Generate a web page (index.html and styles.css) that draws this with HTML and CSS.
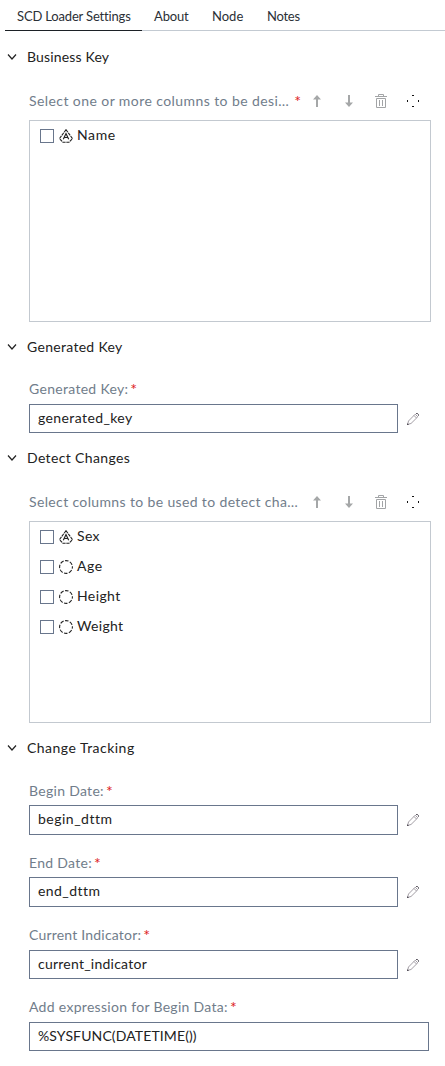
FILE: index.html
```html
<!DOCTYPE html>
<html lang="en">
<head>
<meta charset="utf-8">
<title>SCD Loader Settings</title>
<link rel="stylesheet" href="styles.css">
</head>
<body>
<svg class="defs" width="0" height="0">
  <symbol id="chevron" viewBox="0 0 10 10"><path d="M1 2.5 5 7 9 2.5" fill="none" stroke="#222" stroke-width="1.2"/></symbol>
  <symbol id="up" viewBox="0 0 12 14"><path d="M6 1 10 5.5H7V13H5V5.5H2Z" fill="#a5a7a8"/></symbol>
  <symbol id="down" viewBox="0 0 12 14"><path d="M6 13 10 8.5H7V1H5V8.5H2Z" fill="#a5a7a8"/></symbol>
  <symbol id="trash" viewBox="0 0 12 14"><path d="M0 2.5H12M3.5 2V.5H8.5V2M1.5 4.5H10.5V13.5H1.5ZM4.5 6V12M7.5 6V12" fill="none" stroke="#a2a4a6"/></symbol>
  <symbol id="add" viewBox="0 0 14 14"><path d="M6 1.5H8M6 12.5H8M1.5 6V8M12.5 6V8" fill="none" stroke="#111"/></symbol>
  <symbol id="pencil" viewBox="0 0 12 12"><path d="M.6 11.4 1.5 8 8.2 1.2 10.8 3.8 4 10.5ZM7 2.5 9.5 5" fill="none" stroke="#8b858e" stroke-width=".8"/><path d="M.2 10.5V11.8H1.7M9.2 .5H10.3L11.6 1.7V2.7" fill="none" stroke="#3a3540"/></symbol>
  <symbol id="character" viewBox="0 0 14 14"><path d="M7 .7 13.5 9.6 10 13.3H4L.5 9.6Z" fill="none" stroke="#222" stroke-width="1.1" stroke-dasharray="3.2 .7"/><path d="M4.3 10.2 7 4.6 9.7 10.2M5.2 8.5H8.8" fill="none" stroke="#222" stroke-width="1.2"/></symbol>
  <symbol id="numeric" viewBox="0 0 14 14"><circle cx="7" cy="7" r="6.4" fill="none" stroke="#222" stroke-width="1.1" stroke-dasharray="3.6 1.43" stroke-dashoffset="1.8"/></symbol>
</svg>
<nav class="tabs">
  <span class="tab active"><span class="t-set">SCD Loader Settings</span></span>
  <span class="tab t-about">About</span>
  <span class="tab t-node">Node</span>
  <span class="tab t-notes">Notes</span>
</nav>
<main>
  <section>
    <h2 class="first"><svg><use href="#chevron"/></svg><span class="h-bk">Business Key</span></h2>
    <div class="list-head">
      <span class="label l-one">Select one or more columns to be desi…</span><span class="req">*</span>
      <div class="tools"><svg class="arrow"><use href="#up"/></svg><svg class="arrow"><use href="#down"/></svg><svg class="arrow"><use href="#trash"/></svg><svg class="add"><use href="#add"/></svg></div>
    </div>
    <ul class="list">
      <li><i class="check"></i><svg><use href="#character"/></svg><span class="i-name">Name</span></li>
    </ul>
  </section>
  <section>
    <h2><svg><use href="#chevron"/></svg><span class="h-gk">Generated Key</span></h2>
    <div class="field">
      <div class="caption"><span class="label l-gk">Generated Key:</span><span class="req">*</span></div>
      <div class="entry"><div class="input"><span class="v-gk">generated_key</span></div><svg class="edit"><use href="#pencil"/></svg></div>
    </div>
  </section>
  <section>
    <h2><svg><use href="#chevron"/></svg><span class="h-dc">Detect Changes</span></h2>
    <div class="list-head">
      <span class="label l-two">Select columns to be used to detect cha…</span>
      <div class="tools"><svg class="arrow"><use href="#up"/></svg><svg class="arrow"><use href="#down"/></svg><svg class="arrow"><use href="#trash"/></svg><svg class="add"><use href="#add"/></svg></div>
    </div>
    <ul class="list">
      <li><i class="check"></i><svg><use href="#character"/></svg><span class="i-sex">Sex</span></li>
      <li><i class="check"></i><svg><use href="#numeric"/></svg><span class="i-age">Age</span></li>
      <li><i class="check"></i><svg><use href="#numeric"/></svg><span class="i-height">Height</span></li>
      <li><i class="check"></i><svg><use href="#numeric"/></svg><span class="i-weight">Weight</span></li>
    </ul>
  </section>
  <section>
    <h2><svg><use href="#chevron"/></svg><span class="h-ct">Change Tracking</span></h2>
    <div class="field begin">
      <div class="caption"><span class="label l-bd">Begin Date:</span><span class="req">*</span></div>
      <div class="entry near"><div class="input tall"><span class="v-bd">begin_dttm</span></div><svg class="edit"><use href="#pencil"/></svg></div>
    </div>
    <div class="field next">
      <div class="caption"><span class="label l-ed">End Date:</span><span class="req">*</span></div>
      <div class="entry near"><div class="input tall"><span class="v-ed">end_dttm</span></div><svg class="edit"><use href="#pencil"/></svg></div>
    </div>
    <div class="field next">
      <div class="caption"><span class="label l-ci">Current Indicator:</span><span class="req">*</span></div>
      <div class="entry"><div class="input"><span class="v-ci">current_indicator</span></div><svg class="edit"><use href="#pencil"/></svg></div>
    </div>
    <div class="field next">
      <div class="caption"><span class="label l-ae">Add expression for Begin Data:</span><span class="req">*</span></div>
      <div class="entry"><div class="input wide"><span class="v-ae">%SYSFUNC(DATETIME())</span></div></div>
    </div>
  </section>
</main>
</body>
</html>
```
FILE: styles.css
```css
* { box-sizing: border-box; }
body { margin: 0; background: #fff; color: #222; font: 14px/20px Lato, "Open Sans", sans-serif; white-space: nowrap; }
.defs { display: block; height: 0; }
svg { flex: none; }
.tabs { display: flex; height: 31px; margin-left: 5px; border-bottom: 1px solid #c3cad2; font-size: 13px; line-height: 32px; color: #2b3036; }
.tab { flex: none; height: 31px; }
.tab.active { width: 137px; padding-left: 12px; border-bottom: 1px solid #1c2126; margin-right: 12px; }
.t-set { letter-spacing: -.17px; }
.t-about { width: 58px; letter-spacing: -.15px; }
.t-node { width: 55px; }
.t-notes { letter-spacing: -.25px; }
h2 { display: flex; align-items: center; gap: 10px; height: 20px; margin: 15px 0 0; padding-left: 7px; font-size: 14px; font-weight: 400; }
h2.first { margin-top: 16px; }
h2 svg { width: 10px; height: 10px; }
.h-bk { letter-spacing: .17px; }
.h-gk { letter-spacing: .3px; }
.h-dc { letter-spacing: .36px; }
.h-ct { letter-spacing: .47px; }
.label { color: #717d8b; }
.l-one { letter-spacing: .42px; }
.l-two { letter-spacing: .36px; }
.l-gk, .l-ed, .l-bd, .l-ae { letter-spacing: .3px; }
.l-ci { letter-spacing: .2px; }
.req { color: #d22; margin-left: 2px; font-size: 16px; }
.list-head { display: flex; align-items: center; width: 402px; height: 20px; margin: 24px 0 0 29px; }
.list-head .req { margin-left: 5px; }
.tools { display: flex; align-items: center; gap: 20px; margin-left: auto; padding-right: 11px; }
.arrow { width: 12px; height: 14px; }
.add { width: 14px; height: 14px; margin-left: -1px; }
.list { width: 402px; height: 202px; margin: 9px 0 0 29px; padding: 0 0 0 10px; border: 1px solid #c3c9d0; list-style: none; }
.list li { display: flex; align-items: center; height: 30px; }
.list li svg { width: 14px; height: 14px; margin: 0 4px 0 5px; }
.list li span, .input span { padding-bottom: 2px; }
.i-name, .i-age { letter-spacing: .6px; }
.i-sex, .i-weight { letter-spacing: .33px; }
.i-height { letter-spacing: .4px; }
.check { width: 14px; height: 14px; border: 1px solid #69768c; }
.field { margin: 22px 0 0 29px; }
.field.begin { margin-top: 23px; }
.field.next { margin-top: 18px; }
.caption { height: 20px; display: flex; }
.entry { display: flex; align-items: center; gap: 9px; margin-top: 5px; }
.entry.near { margin-top: 4px; }
.input { display: flex; align-items: center; width: 369px; height: 29px; padding-left: 8px; border: 1px solid #69768c; }
.input.tall { height: 30px; }
.input.wide { width: 400px; }
.edit { width: 12px; height: 12px; }
.v-gk { letter-spacing: .4px; }
.v-bd { letter-spacing: .5px; }
.v-ed { letter-spacing: .44px; }
.v-ci { letter-spacing: .24px; }
.v-ae { letter-spacing: .12px; }
```
